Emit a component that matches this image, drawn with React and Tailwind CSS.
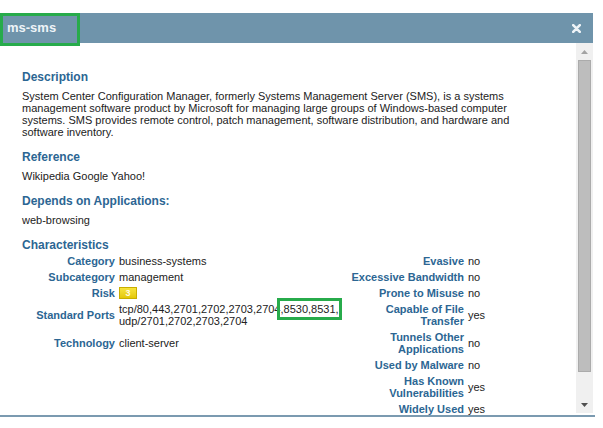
const rows = [
  { l: "Category", v: "business-systems", rl: "Evasive", rv: "no" },
  { l: "Subcategory", v: "management", rl: "Excessive Bandwidth", rv: "no" },
  { l: "Risk", risk: 3, rl: "Prone to Misuse", rv: "no" },
  {
    l: "Standard Ports",
    v: "tcp/80,443,2701,2702,2703,2704,8530,8531, udp/2701,2702,2703,2704",
    rl: "Capable of File Transfer",
    rv: "yes",
  },
  { l: "Technology", v: "client-server", rl: "Tunnels Other Applications", rv: "no" },
  { l: "", v: "", rl: "Used by Malware", rv: "no" },
  { l: "", v: "", rl: "Has Known Vulnerabilities", rv: "yes" },
  { l: "", v: "", rl: "Widely Used", rv: "yes" },
];

const Heading = ({ children, className = "" }) => (
  <h3 className={`text-[12px] leading-[16px] font-bold text-[#2c6693] ${className}`}>
    {children}
  </h3>
);

const App = () => {
  return (
    <div
      className="relative w-[603px] h-[428px] bg-white overflow-hidden text-[11px] leading-[12px] text-[#222]"
      style={{ fontFamily: '"Liberation Sans", Arial, sans-serif' }}
    >
      <div className="pt-[13px] w-[593px]">
        {/* title bar */}
        <div className="h-[30px] bg-[#6f94ab] flex items-center justify-between pl-[7px] pr-[12px]">
          <span className="text-[13px] font-bold text-[#eef4f8]">ms-sms</span>
          <svg width="9" height="9" viewBox="0 0 9 9">
            <path d="M1.2 1.2 L7.8 7.8 M7.8 1.2 L1.2 7.8" stroke="#eef3f7" strokeWidth="2.6" strokeLinecap="round" />
          </svg>
        </div>

        {/* body */}
        <div className="flex h-[370px]">
          <div className="flex-1 pl-[22px] pr-[28px] pt-[26px]">
            <Heading>Description</Heading>
            <p className="mt-[5px]">
              System Center Configuration Manager, formerly Systems Management Server (SMS), is a
              systems management software product by Microsoft for managing large groups of
              Windows-based computer systems. SMS provides remote control, patch management,
              software distribution, and hardware and software inventory.
            </p>

            <Heading className="mt-[11px]">Reference</Heading>
            <p className="mt-[5px]">Wikipedia Google Yahoo!</p>

            <Heading className="mt-[11px]">Depends on Applications:</Heading>
            <p className="mt-[5px]">web-browsing</p>

            <Heading className="mt-[11px]">Characteristics</Heading>
            <div className="grid grid-cols-[95px_228px_121px_1fr]">
              {rows.map((r, i) => (
                <div key={i} className="contents">
                  <div className="py-[2px] pr-[2px] text-right font-bold text-[#2c6693] flex items-center justify-end">
                    {r.l}
                  </div>
                  <div className="py-[2px] pl-[2px] flex items-center">
                    {r.risk ? (
                      <span className="inline-flex items-center justify-center w-[18px] h-[12px] bg-gradient-to-b from-[#f7e43a] to-[#e4c800] border border-[#c9ae00] text-[9px] leading-[10px] font-bold text-[#fffbe0]">
                        {r.risk}
                      </span>
                    ) : (
                      r.v
                    )}
                  </div>
                  <div className="py-[2px] pr-[2px] text-right font-bold text-[#2c6693] flex items-center justify-end">
                    {r.rl}
                  </div>
                  <div className="py-[2px] pl-[2px] flex items-center">{r.rv}</div>
                </div>
              ))}
            </div>
          </div>

          {/* scrollbar */}
          <div className="w-[17px] bg-[#f0f0f0] flex flex-col items-center">
            <div className="h-[17px] flex items-center justify-center">
              <svg width="7" height="4" viewBox="0 0 7 4">
                <path d="M3.5 0 L7 4 L0 4 Z" fill="#a3a3a3" />
              </svg>
            </div>
            <div className="w-[13px] h-[312px] bg-[#bdbdbd] border border-[#ababab]" />
            <div className="flex-1 flex items-end pb-[6px]">
              <svg width="7" height="4" viewBox="0 0 7 4">
                <path d="M0 0 L7 0 L3.5 4 Z" fill="#505050" />
              </svg>
            </div>
          </div>
        </div>
        <div className="relative mt-[2px] h-[2px] w-[595px] bg-[#7b9ab0]" />
      </div>

      {/* annotation boxes */}
      <div className="absolute left-0 top-[13px] w-[80px] h-[33px] border-[3px] border-[#27ab4b]" />
      <div className="absolute left-[277px] top-[298px] w-[65px] h-[22px] border-[3px] border-[#27ab4b]" />
    </div>
  );
};

export default App;
